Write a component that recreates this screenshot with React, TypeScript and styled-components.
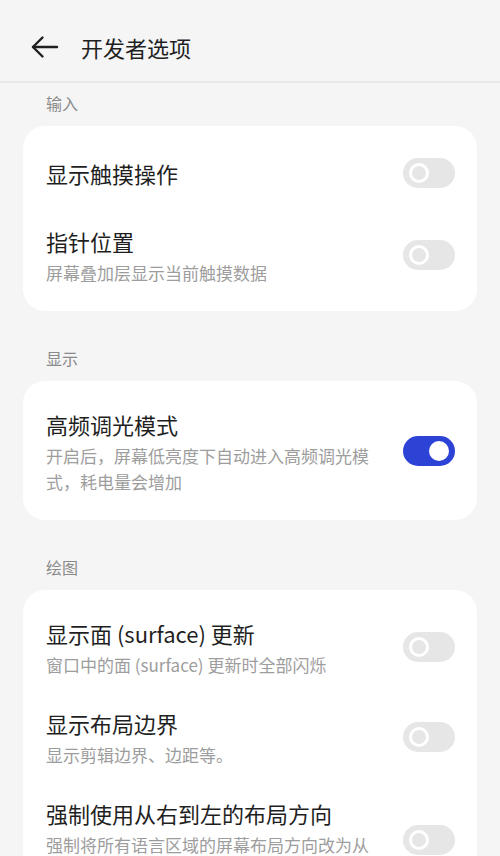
import React from 'react'
import styled, { createGlobalStyle } from 'styled-components';

const GlobalStyle = createGlobalStyle`
    body {
        margin: 0;
        background: #f5f5f5;
        font-family: "Noto Sans CJK SC", "Noto Sans", sans-serif;
        overflow: hidden;
    }
`

type Item = { title: string; desc?: string; on?: boolean }
type Section = { label: string; items: Item[] }

const sections: Section[] = [
    {
        label: '输入',
        items: [
            { title: '显示触摸操作' },
            { title: '指针位置', desc: '屏幕叠加层显示当前触摸数据' },
        ],
    },
    {
        label: '显示',
        items: [
            { title: '高频调光模式', desc: '开启后，屏幕低亮度下自动进入高频调光模式，耗电量会增加', on: true },
        ],
    },
    {
        label: '绘图',
        items: [
            { title: '显示面 (surface) 更新', desc: '窗口中的面 (surface) 更新时全部闪烁' },
            { title: '显示布局边界', desc: '显示剪辑边界、边距等。' },
            { title: '强制使用从右到左的布局方向', desc: '强制将所有语言区域的屏幕布局方向改为从右到左' },
        ],
    },
]

export default function App() {
    return (
        <>
            <GlobalStyle />
            <Page>
                <Header>
                    <BackButton aria-label="返回">
                        <svg width="28" height="24" viewBox="0 0 28 24" fill="none" stroke="#1f1f1f" strokeWidth="2.4" strokeLinecap="round" strokeLinejoin="round">
                            <path d="M2 12H26" />
                            <path d="M11.5 2.5L2 12l9.5 9.5" />
                        </svg>
                    </BackButton>
                    <Title>开发者选项</Title>
                </Header>
                {sections.map((s, i) => (
                    <div key={s.label}>
                        <SectionLabel first={i === 0}>{s.label}</SectionLabel>
                        <Card>
                            {s.items.map((item) => (
                                <Row key={item.title} single={!item.desc}>
                                    <TextBlock>
                                        <ItemTitle>{item.title}</ItemTitle>
                                        {item.desc && <ItemDesc>{item.desc}</ItemDesc>}
                                    </TextBlock>
                                    <Switch on={!!item.on} single={!item.desc}>
                                        <Knob on={!!item.on} />
                                    </Switch>
                                </Row>
                            ))}
                        </Card>
                    </div>
                ))}
            </Page>
        </>
    )
}

const Page = styled.div`
    min-height: 856px;
    background: #f5f5f5;
`

const Header = styled.div`
    height: 83px;
    box-sizing: border-box;
    display: flex;
    align-items: center;
    padding: 12px 0 0 31px;
    gap: 22px;
    border-bottom: 2px solid #e8e8e8;
`

const BackButton = styled.button`
    border: none;
    background: none;
    padding: 0;
    display: flex;
    cursor: pointer;
`

const Title = styled.h1`
    margin: 0;
    font-size: 22px;
    font-weight: 400;
    color: #1f1f1f;
    line-height: 30px;
`

const SectionLabel = styled.div<{ first?: boolean }>`
    padding: ${(p) => (p.first ? '10px' : '37px')} 46px 13px;
    font-size: 16px;
    line-height: 20px;
    color: #8a8a8a;
`

const Card = styled.div`
    margin: 0 23px;
    background: #ffffff;
    border-radius: 22px;
    padding: 14px 22px 9px 23px;
`

const Row = styled.div<{ single?: boolean }>`
    padding: ${(p) => (p.single ? '18px 0 24px' : '14px 0 16px')};
    display: flex;
    align-items: center;
    justify-content: space-between;
    gap: 20px;
`

const TextBlock = styled.div`
    flex: 1;
    max-width: 335px;
`

const ItemTitle = styled.div`
    font-size: 22px;
    line-height: 30px;
    color: #1f1f1f;
`

const ItemDesc = styled.div`
    margin-top: 4px;
    font-size: 17px;
    line-height: 26px;
    color: #9d9d9d;
`

const Switch = styled.div<{ on: boolean; single?: boolean }>`
    flex-shrink: 0;
    width: 52px;
    height: 30px;
    border-radius: 15px;
    margin-top: ${(p) => (p.single ? '0' : '-3px')};
    background: ${(p) => (p.on ? '#2c43d6' : '#e6e6e6')};
    display: flex;
    align-items: center;
    justify-content: ${(p) => (p.on ? 'flex-end' : 'flex-start')};
    padding: 0 6px;
    box-sizing: border-box;
`

const Knob = styled.div<{ on: boolean }>`
    width: 20px;
    height: 20px;
    border-radius: 50%;
    box-sizing: border-box;
    background: ${(p) => (p.on ? '#ffffff' : 'transparent')};
    border: ${(p) => (p.on ? 'none' : '3.5px solid #ffffff')};
`
